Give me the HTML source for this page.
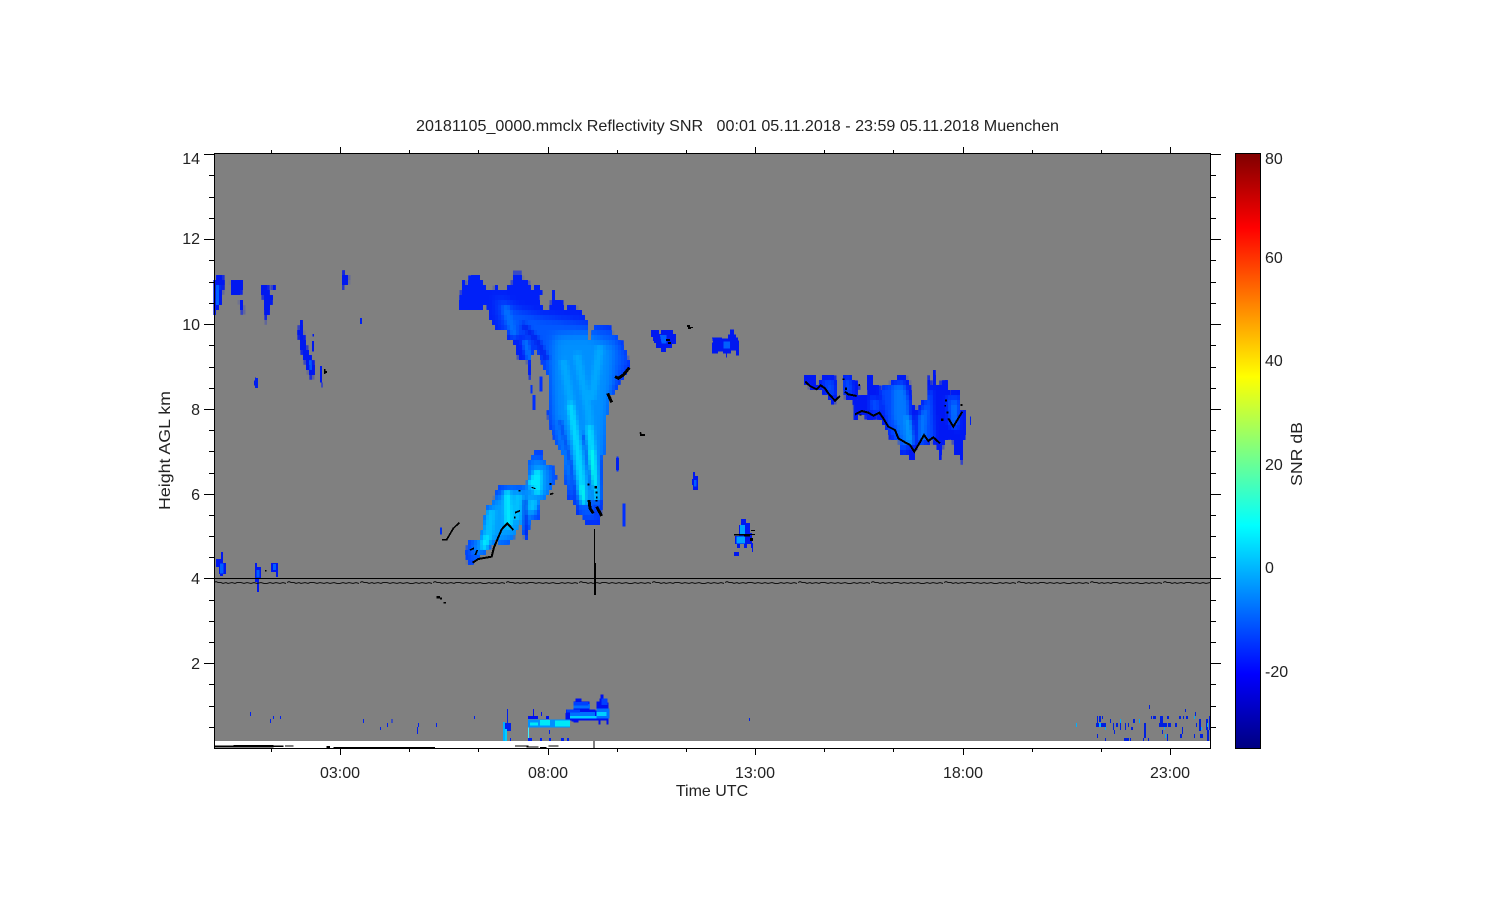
<!DOCTYPE html>
<html><head><meta charset="utf-8"><title>Reflectivity SNR</title>
<style>html,body{margin:0;padding:0;background:#fff;width:1500px;height:900px;overflow:hidden}svg{display:block}text{font-family:"Liberation Sans",sans-serif;font-size:16px;fill:#222}</style></head>
<body>
<svg width="1500" height="900" viewBox="0 0 1500 900" xmlns="http://www.w3.org/2000/svg">
<defs>
<linearGradient id="jet" x1="0" y1="1" x2="0" y2="0">
<stop offset="0" stop-color="#000080"/><stop offset=".125" stop-color="#0000ff"/><stop offset=".375" stop-color="#00ffff"/><stop offset=".625" stop-color="#ffff00"/><stop offset=".875" stop-color="#ff0000"/><stop offset="1" stop-color="#800000"/>
</linearGradient>
<filter id="b8" x="-30%" y="-30%" width="160%" height="160%"><feGaussianBlur stdDeviation="14"/></filter>
<filter id="b4" x="-30%" y="-30%" width="160%" height="160%"><feGaussianBlur stdDeviation="6"/></filter>
<filter id="b2" x="-30%" y="-30%" width="160%" height="160%"><feGaussianBlur stdDeviation="5"/></filter>
<filter id="px" filterUnits="userSpaceOnUse" x="0" y="0" width="1500" height="900" color-interpolation-filters="sRGB">
<feFlood x="1" y="2" width="1" height="1" flood-color="#000"/>
<feComposite x="0" y="0" width="3" height="5"/>
<feTile result="a"/>
<feComposite in="SourceGraphic" in2="a" operator="in"/>
<feMorphology operator="dilate" radius="1 2"/>
</filter>
<pattern id="wave" patternUnits="userSpaceOnUse" x="214" y="579" width="73" height="7">
<path fill="none" stroke="#111" stroke-width="1" d="M0 3.5l2-1 2 1 3 0 2 1 3-1 2 1 4-1 3 1 2-1 4 0 3 1 3-1 4 1 3-1 3 1 4-1 3 1 3 0 3-1 3 1 3-1 4 1 3-1 3 1"/>
</pattern>
<clipPath id="c1"><path d="M55 155 60 125 65 60 75 60 80 72 85 55 100 45 120 45 125 65 135 75 140 85 160 90 165 70 175 90 200 90 205 70 215 70 218 38 242 38 250 55 270 70 275 95 290 70 300 70 305 100 295 110 305 140 330 155 335 95 345 95 350 125 365 115 372 150 390 135 415 145 435 165 442 190 445 250 460 210 465 200 510 200 520 220 550 250 565 295 570 325 555 345 540 365 525 395 510 405 510 430 500 470 500 560 490 590 490 700 482 770 482 790 435 790 430 770 410 770 405 730 385 720 380 680 370 650 375 630 370 590 345 545 325 485 322 460 330 435 325 350 310 320 290 270 275 290 275 360 270 360 265 320 255 290 248 305 235 300 225 250 205 240 200 210 170 210 150 180 140 130 130 130 125 155 85 155Z"/></clipPath>
<clipPath id="c2"><path d="M112 380 108 335 115 295 140 295 150 300 170 195 185 190 205 140 225 130 250 130 290 130 295 65 320 30 335 30 340 60 355 75 375 85 380 110 370 140 350 170 330 180 330 235 305 235 290 300 280 290 270 240 250 300 215 320 200 300 170 335 150 350 125 370 122 380Z"/></clipPath>
<clipPath id="c3"><path d="M45 50 75 50 80 75 95 50 130 42 140 60 145 110 135 128 125 128 105 100 60 85 45 70ZM157 42 185 42 190 65 210 70 205 100 200 115 235 100 232 45 245 45 250 70 275 85 305 65 335 42 345 45 360 65 365 130 385 150 395 125 415 120 415 50 425 70 433 30 440 70 470 65 480 100 495 85 510 90 512 150 530 155 525 220 515 310 510 280 495 280 485 230 465 240 450 300 440 250 420 245 410 260 380 260 372 300 360 300 355 285 330 280 325 235 300 235 285 200 260 170 240 180 215 165 195 180 190 120 165 115Z"/></clipPath>
</defs>
<rect width="1500" height="900" fill="#fff"/>
<rect x="214" y="154" width="996" height="587" fill="#808080"/>

<!-- pixelated cloud fills -->
<g filter="url(#px)">
<g transform="translate(440 260) scale(.33333)">
<g clip-path="url(#c1)">
<rect width="630" height="840" fill="#0020f8"/>
<g filter="url(#b8)">
<path fill="#0058ff" d="M170 110 230 150 300 170 440 190 530 210 570 300 520 400 500 580 490 780 420 780 375 690 325 480 315 330 270 230 190 210Z"/>
<path fill="#0090ff" d="M345 230 440 225 520 260 510 390 490 700 430 730 385 640 345 470 340 330Z"/>
</g>
<g filter="url(#b2)">
<path fill="none" stroke="#00a8ff" stroke-width="22" d="M370 300 400 470 430 680M410 280 445 450 470 720M480 260 455 420"/>
<path fill="none" stroke="#00d8ff" stroke-width="20" d="M390 430 412 570 428 700M448 500 458 600 462 720"/>
<path fill="none" stroke="#00f8f0" stroke-width="16" d="M455 570 460 680M425 680 432 730"/>
<path fill="none" stroke="#0028f0" stroke-width="7" d="M360 480 395 620 412 770M430 520 450 640 468 770M486 590 483 780"/>
<path fill="none" stroke="#0020f0" stroke-width="18" d="M245 190 290 240 320 300"/>
<path fill="none" stroke="#0070ff" stroke-width="20" d="M195 140 225 230M255 240 270 300"/>
</g>
</g>
</g>
<g transform="translate(430 440) scale(.33333)">
<g clip-path="url(#c2)">
<rect width="540" height="510" fill="#0040ff"/>
<g filter="url(#b8)"><path fill="#00a0ff" d="M130 320 180 190 240 140 285 160 305 50 360 80 360 170 320 190 290 270 240 300 190 310 130 360Z"/></g>
<g filter="url(#b2)">
<path fill="none" stroke="#00e8ff" stroke-width="20" d="M160 325 180 265M232 155 235 260M300 140 325 95 322 160"/>
<path fill="none" stroke="#00c0ff" stroke-width="24" d="M185 210 175 290M265 160 255 240M310 180 305 215"/>
<path fill="none" stroke="#0010e8" stroke-width="10" d="M285 175 288 290"/>
</g>
</g>
</g>
<g transform="translate(790 360) scale(.33333)">
<g clip-path="url(#c3)">
<rect width="570" height="330" fill="#0018f4"/>
<g filter="url(#b4)">
<path fill="#0048ff" d="M95 65 130 60 135 110 115 100ZM160 55 182 55 188 100 165 100ZM270 85 340 60 360 130 348 280 330 270 295 210ZM240 110 270 120 270 160 240 150ZM395 140 425 80 435 240 390 250ZM470 110 510 110 505 210 480 200Z"/>
<path fill="#0078ff" d="M310 80 345 80 368 260 340 250 310 170ZM385 170 410 140 405 240 385 250ZM484 130 502 130 498 190 488 185Z"/>
<path fill="#00a0ff" d="M345 170 362 170 372 250 355 250Z"/>
</g>
</g>
</g>
<g transform="translate(205 265) scale(.33333)">
<path fill="#0018f0" d="M28 150 28 45 42 30 55 30 57 60 50 110 35 140ZM75 55 82 42 86 55 100 42 115 42 115 75 100 95 80 95ZM100 100 115 108 118 140 112 150 102 110ZM168 65 175 55 190 55 192 85 207 88 190 150 183 175 178 120 170 85ZM200 63h10v12h-10zM410 30 416 20 420 30 432 30 432 52 415 62 415 75 410 75ZM279 195 288 162 292 175 302 235 315 270 332 305 322 345 312 330 290 265 280 215Z"/>
<path fill="#0060ff" d="M32 60 46 55 42 110 34 120ZM312 285 322 300 320 325Z"/>
</g>
</g>

<g shape-rendering="crispEdges">
<!-- main cloud overlays -->
<g transform="translate(440 260) scale(.33333)">
<path fill="none" stroke="#000" stroke-width="9" d="M525 350 535 355 550 345 568 323M503 400 515 427M447 720 450 745 460 760M470 740 485 768"/>
<path fill="#000" d="M443 670h6v6h-6zM463 678h8v8h-8zM467 695h5v5h-5zM468 710h5v6h-5zM467 720h5v5h-5zM598 517h6v6h8v4h-10z"/>
<path fill="#0030ff" d="M272 375h5v25h-5zM298 350h9v45h-9zM278 405h9v45h-9zM530 590h6v45h-6zM548 730h8v70h-8z"/>
</g>
<g transform="translate(430 440) scale(.33333)">
<path fill="none" stroke="#000" stroke-width="6" d="M128 368 145 357 185 350 192 322 215 268 232 250 250 270"/>
<path fill="none" stroke="#000" stroke-width="5" d="M120 330 132 325M136 345 142 330M255 218 270 212M36 299 50 299 70 265 88 248M360 163 370 160"/>
<path fill="none" stroke="#000" stroke-width="3" d="M305 142 316 146"/>
<path fill="#000" d="M358 129h6v6h-6zM266 150h5v4h-5zM252 230h5v6h-5zM20 468h10v5h6v5h-6v-3h-10zM40 486h8v5h-8z"/>
<path fill="#0030f0" d="M30 262h6v22h-6z"/>
</g>
<g transform="translate(790 360) scale(.33333)">
<path fill="none" stroke="#000" stroke-width="6" d="M46 65 60 78 80 88 92 76 105 85 115 100 135 122 150 108M165 95 175 103 200 108M192 165 215 153 235 158 250 167 268 158 280 175 295 200 315 210 325 235 345 247 360 255 373 275 385 255 402 225 415 243 430 232 450 250M475 175 490 200 505 175 517 155"/>
<path fill="#000" d="M158 55h5v5h-5zM205 72h5v6h-5zM165 82h6v8h-6zM465 118h6v6h-6zM463 135h5v5h-5zM470 155h5v5h-5zM512 132h6v6h-6zM209 164h6v3h-6zM453 175h8v8h-8z"/>
<path fill="#0020f0" d="M540 170h3v25h-3zM190 130h5v50h-5z"/>
</g>
<g transform="translate(205 265) scale(.33333)">
<path fill="#0018f0" d="M323 207h4v8h-4zM321 228h6v32h-6zM345 303h6v50h-6zM349 353h3v15h-3zM147 347h3v-10h3v10h3v20h-6v-5h-3z"/>
<path fill="#000" d="M357 312h4v6h5v6h-4v3h-5z"/>
</g>
<!-- other blobs -->
<g transform="translate(640 320) scale(.33333)">
<path fill="#0018f0" d="M33 30h24v12h6v-12h36v12h9v30h-12v12h-18v12h-15v-12h-15v-15h-6v-6h-3v-12h-6zM216 52h30v3h18v-12h6v-15h12v15h6v9h6v12h-3v-3h6v45h-9v-15h-15v9h-12v12h-3v-12h-9v-6h-15v6h-18v-33h3zM303 597h15v12h12v30h6v30h3v27h-3v-12h-3v-12h-12v12h-9v-12h-12v12h-9v-12h-6v-24h12v-33h6zM282 696h15v12h-15zM156 477h3v-21h6v12h9v42h-15v-15h-3z"/>
<path fill="#0060ff" d="M60 45h20v25h-15zM250 65h20v20h-20zM162 480h8v20h-8z"/>
<path fill="#00a0ff" d="M300 615h15v30h-15zM290 650h25v20h-25z"/>
<path fill="#000" d="M282 642h63v3h-15v5h-18v-3h-30zM330 654h9v9h-9zM333 630h12v3h-12zM78 57h12v6h-12zM84 66h9v6h-9zM141 15h9v6h9v3h-6v3h-9v-6h-3zM0 336h3v6h12v6h-15z"/>
</g>
<g transform="translate(205 540) scale(.33333)">
<path fill="#0018f0" d="M33 57h15v-21h6v33h9v33h-9v6h-9v-6h-3v-21h-9zM150 69h6v12h12v36h-6v39h-6v-30h-6zM198 69h21v42h-6v-15h-15z"/>
<path fill="#0060ff" d="M45 70h10v30h-10zM155 90h8v22h-8zM204 72h9v18h-9z"/>
<path fill="#000" d="M180 90h5v5h-5z"/>
</g>
<path fill="#0020f0" d="M255 378h3v10h-3zM360 318h2v6h-2zM616 458h3v12h-3z"/>

<!-- low level echoes -->
<g transform="translate(200 680) scale(.33333)">
<path fill="#0010f0" d="M1098 88h22v-24h6v-9h18v9h24v24h18v3h3v-27h9v-9h3v-12h9v12h9v12h6v66h-6v-12h-18v12h-6v-12h-60v6h-15v-3h-6v-3h-18z"/>
<path fill="#0070ff" d="M1110 96h75v20h-75zM1190 85h38v30h-38zM1120 72h50v14h-50z"/>
<path fill="#0040ff" d="M1120 66h45v10h-45zM1100 88h40v10h-40zM1205 55h18v20h-18z"/>
<path fill="#00d0ff" d="M1110 108h80v8h-80zM1190 96h30v12h-30z"/>
<path fill="#0010f0" d="M984 108h30v9h-30zM999 87h3v21h-3zM1023 96h3v12h-3zM1038 108h9v9h-9z"/>
<path fill="#0090ff" d="M984 118h80v24h-80zM1060 118h50v24h-50z"/>
<path fill="#00e8f8" d="M990 127h24v9h-24zM1020 120h30v16h-30zM1065 122h45v18h-45z"/>
<path fill="#40f0ff" d="M984 142h3v40h-3z"/>
<path fill="#00d0ff" d="M912 140h12v10h-12zM912 150h9v33h-9z"/>
<path fill="#0020f0" d="M915 129h18v24h-12v-6h-6zM921 87h3v42h-3zM930 174h3v9h-3zM984 174h12v9h-12zM1020 174h6v9h-6zM1047 174h6v9h-6zM1083 174h9v9h-9zM1101 174h6v9h-6zM1047 150h3v12h-3zM150 96h3v12h-3zM210 117h3v12h-3zM219 108h3v9h-3zM240 108h3v9h-3zM489 117h3v12h-3zM540 141h3v9h-3zM561 129h3v12h-3zM575 117h3v12h-3zM654 129h3v12h-3zM651 141h3v21h-3zM708 129h3v12h-3zM822 108h3v9h-3z"/>
<path fill="#000" d="M45 197h60v6h-60zM100 195h120v7h-120zM220 197h30v4h-30zM255 196h25v3h-25zM380 198h10v6h-10zM400 201h305v3h-305zM945 196h40v3h-40zM980 199h35v4h-35zM1020 201h20v3h-20zM1045 197h30v3h-30z"/>
<path fill="#808080" d="M1179 183h6v21h-6z"/>
</g>
<g transform="translate(1060 690) scale(.33333)">
<path fill="#0020e0" d="M267 45h3v12h-3zM375 57h3v9h-3zM405 66h3v12h-3zM111 78h3v33h-3zM117 78h6v18h-6zM126 78h3v9h-3zM108 99h30v12h-30zM111 132h3v12h-3zM135 144h3v9h-3zM150 87h3v12h-3zM159 99h3v21h-3zM168 99h6v12h-6zM162 120h3v12h-3zM180 99h3v21h-3zM192 144h15v9h-15zM210 144h3v9h-3zM195 99h3v21h-3zM204 99h3v12h-3zM213 111h6v9h-6zM219 87h6v12h-6zM249 144h3v9h-3zM252 99h6v45h-6zM264 144h3v9h-3zM273 78h3v9h-3zM279 78h9v9h-9zM300 78h9v21h-9zM297 99h24v12h-24zM306 120h3v12h-3zM321 78h6v9h-6zM324 99h9v12h-9zM321 132h3v21h-3zM345 99h6v12h-6zM357 78h6v9h-6zM366 111h3v21h-3zM360 132h6v12h-6zM369 78h3v9h-3zM378 78h6v9h-6zM408 99h3v12h-3zM402 132h3v12h-3zM417 87h6v24h-6zM417 111h6v12h-6zM420 132h9v12h-9zM438 87h6v33h-6zM441 120h6v33h-6zM447 78h3v42h-3z"/>
<path fill="#00b0ff" d="M48 99h3v12h-3zM117 99h6v12h-6zM135 111h3v9h-3zM180 87h3v12h-3zM237 87h3v12h-3zM312 111h3v9h-3zM315 132h3v12h-3zM402 78h3v9h-3zM441 99h3v12h-3zM423 111h3v9h-3z"/>
</g>
<path fill="#00b0ff" d="M503 722h2v19h-2z"/>
<path fill="#0020f0" d="M749 718h1v3h-1z"/>

<!-- height lines -->
<rect x="214" y="578" width="996" height="1" fill="#000"/>
<rect x="215" y="579" width="995" height="7" fill="url(#wave)"/>
<rect x="594" y="529" width="1" height="36" fill="#000"/>
<rect x="594" y="563" width="2" height="32" fill="#000"/>
<!-- colorbar -->
<rect x="1235.5" y="153.5" width="25" height="595" fill="url(#jet)" stroke="#000" stroke-width="1"/>
<!-- axes -->
<path fill="none" stroke="#000" stroke-width="1" d="M214.5 153.5H1210.5V748.5H214.5Z"/>
<path fill="none" stroke="#000" d="M204 154.5h10M204 239.5h10M204 324.5h10M204 409.5h10M204 494.5h10M204 578.5h10M204 663.5h10M209 175.5h5M209 197.5h5M209 218.5h5M209 260.5h5M209 282.5h5M209 303.5h5M209 345.5h5M209 367.5h5M209 388.5h5M209 430.5h5M209 451.5h5M209 473.5h5M209 515.5h5M209 536.5h5M209 557.5h5M209 600.5h5M209 621.5h5M209 642.5h5M209 684.5h5M209 706.5h5M209 727.5h5"/>
<path fill="none" stroke="#000" d="M1211 154.5h10M1211 239.5h10M1211 324.5h10M1211 409.5h10M1211 494.5h10M1211 578.5h10M1211 663.5h10M1211 175.5h5M1211 197.5h5M1211 218.5h5M1211 260.5h5M1211 282.5h5M1211 303.5h5M1211 345.5h5M1211 367.5h5M1211 388.5h5M1211 430.5h5M1211 451.5h5M1211 473.5h5M1211 515.5h5M1211 536.5h5M1211 557.5h5M1211 600.5h5M1211 621.5h5M1211 642.5h5M1211 684.5h5M1211 706.5h5M1211 727.5h5"/>
<path fill="none" stroke="#000" d="M340.5 147v6M548.5 147v6M755.5 147v6M963.5 147v6M1170.5 147v6M271.5 150v3M409.5 150v3M478.5 150v3M617.5 150v3M686.5 150v3M824.5 150v3M893.5 150v3M1032.5 150v3M1101.5 150v3"/>
<path fill="none" stroke="#000" d="M340.5 749v6M548.5 749v6M755.5 749v6M963.5 749v6M1170.5 749v6M271.5 749v3M409.5 749v3M478.5 749v3M617.5 749v3M686.5 749v3M824.5 749v3M893.5 749v3M1032.5 749v3M1101.5 749v3"/>
</g>
<!-- text -->
<text x="416" y="131" textLength="643" lengthAdjust="spacingAndGlyphs" xml:space="preserve">20181105_0000.mmclx Reflectivity SNR   00:01 05.11.2018 - 23:59 05.11.2018 Muenchen</text>
<g text-anchor="end">
<text x="200" y="164">14</text><text x="200" y="244">12</text><text x="200" y="330">10</text><text x="200" y="415">8</text><text x="200" y="500">6</text><text x="200" y="584">4</text><text x="200" y="669">2</text>
</g>
<g text-anchor="middle">
<text x="340" y="778">03:00</text><text x="548" y="778">08:00</text><text x="755" y="778">13:00</text><text x="963" y="778">18:00</text><text x="1170" y="778">23:00</text>
<text x="712" y="796">Time UTC</text>
</g>
<text transform="translate(170 510) rotate(-90)" textLength="119" lengthAdjust="spacingAndGlyphs">Height AGL km</text>
<text transform="translate(1302 486) rotate(-90)" textLength="64" lengthAdjust="spacingAndGlyphs">SNR dB</text>
<text x="1265" y="164">80</text><text x="1265" y="263">60</text><text x="1265" y="366">40</text><text x="1265" y="470">20</text><text x="1265" y="573">0</text><text x="1265" y="677">-20</text>
</svg>
</body></html>
